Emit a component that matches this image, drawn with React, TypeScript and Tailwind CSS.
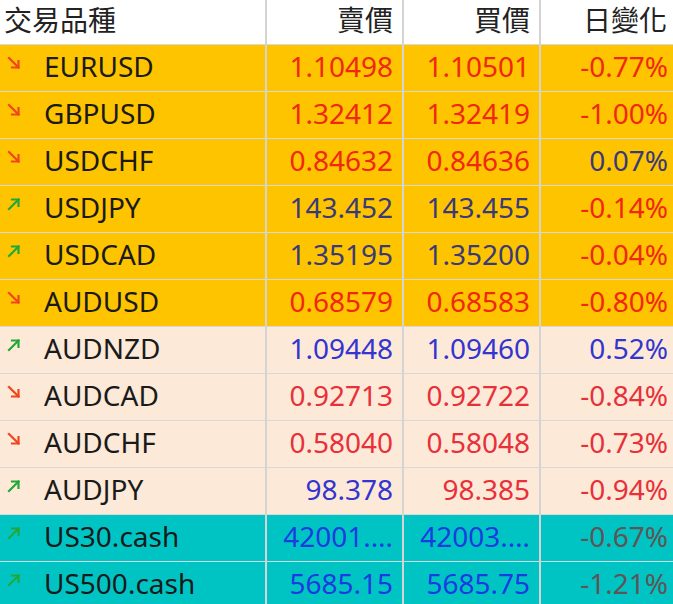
import type { ReactNode } from 'react';

type Tone = 'red' | 'navy' | 'blue' | 'gray';
type Band = 'gold' | 'peach' | 'teal';

type Quote = {
  symbol: string;
  up: boolean;
  bid: string;
  ask: string;
  change: string;
  tones: [Tone, Tone, Tone];
  band: Band;
};

const quotes: Quote[] = [
  { symbol: 'EURUSD', up: false, bid: '1.10498', ask: '1.10501', change: '-0.77%', tones: ['red', 'red', 'red'], band: 'gold' },
  { symbol: 'GBPUSD', up: false, bid: '1.32412', ask: '1.32419', change: '-1.00%', tones: ['red', 'red', 'red'], band: 'gold' },
  { symbol: 'USDCHF', up: false, bid: '0.84632', ask: '0.84636', change: '0.07%', tones: ['red', 'red', 'navy'], band: 'gold' },
  { symbol: 'USDJPY', up: true, bid: '143.452', ask: '143.455', change: '-0.14%', tones: ['navy', 'navy', 'red'], band: 'gold' },
  { symbol: 'USDCAD', up: true, bid: '1.35195', ask: '1.35200', change: '-0.04%', tones: ['navy', 'navy', 'red'], band: 'gold' },
  { symbol: 'AUDUSD', up: false, bid: '0.68579', ask: '0.68583', change: '-0.80%', tones: ['red', 'red', 'red'], band: 'gold' },
  { symbol: 'AUDNZD', up: true, bid: '1.09448', ask: '1.09460', change: '0.52%', tones: ['blue', 'blue', 'blue'], band: 'peach' },
  { symbol: 'AUDCAD', up: false, bid: '0.92713', ask: '0.92722', change: '-0.84%', tones: ['red', 'red', 'red'], band: 'peach' },
  { symbol: 'AUDCHF', up: false, bid: '0.58040', ask: '0.58048', change: '-0.73%', tones: ['red', 'red', 'red'], band: 'peach' },
  { symbol: 'AUDJPY', up: true, bid: '98.378', ask: '98.385', change: '-0.94%', tones: ['blue', 'red', 'red'], band: 'peach' },
  { symbol: 'US30.cash', up: true, bid: '42001.…', ask: '42003.…', change: '-0.67%', tones: ['blue', 'blue', 'gray'], band: 'teal' },
  { symbol: 'US500.cash', up: true, bid: '5685.15', ask: '5685.75', change: '-1.21%', tones: ['blue', 'blue', 'gray'], band: 'teal' },
];

const bandBg: Record<Band, string> = {
  gold: 'bg-[#ffc400]',
  peach: 'bg-[#fce9d7]',
  teal: 'bg-[#00c4c4]',
};

// the text colour depends on the band too, so pick per band
function toneClass(tone: Tone, band: Band) {
  if (tone === 'red') return band === 'gold' ? 'text-[#f02810]' : 'text-[#e8303a]';
  if (tone === 'navy') return 'text-[#3a3a78]';
  if (tone === 'gray') return 'text-[#5f5555]';
  return band === 'teal' ? 'text-[#1c3ce0]' : 'text-[#3434d0]';
}

function Arrow({ up }: { up: boolean }) {
  const color = up ? '#22a83a' : '#f0461e';
  return (
    <svg width="14" height="14" viewBox="0 0 14 14" fill="none" stroke={color} strokeWidth="2.2" strokeLinecap="square">
      {up ? (
        <>
          <path d="M2 12 L11.5 2.5" />
          <path d="M5 2.5 H11.5 V9" />
        </>
      ) : (
        <>
          <path d="M2 2 L11.5 11.5" />
          <path d="M11.5 5 V11.5 H5" />
        </>
      )}
    </svg>
  );
}

function Cell({ children, className = '' }: { children: ReactNode; className?: string }) {
  return (
    <td className={`h-[47px] pb-[4px] border-b border-[#d8d8d8] border-r-2 border-r-[#d4d4d4] last:border-r-0 whitespace-nowrap ${className}`}>
      {children}
    </td>
  );
}

export default function App() {
  return (
    <div className="w-[673px] h-[604px] overflow-hidden bg-white font-['Noto_Sans','Noto_Sans_CJK_TC',sans-serif] text-[28px] leading-none">
      <table className="border-collapse table-fixed w-[673px]">
        <colgroup>
          <col className="w-[266px]" />
          <col className="w-[137px]" />
          <col className="w-[137px]" />
          <col className="w-[133px]" />
        </colgroup>
        <thead>
          <tr className="text-[#222]">
            <th className="h-[44px] pb-[4px] font-normal text-left pl-[4px] border-b border-[#d8d8d8] border-r-2 border-r-[#d4d4d4]">交易品種</th>
            <th className="pb-[4px] font-normal text-right pr-[9px] border-b border-[#d8d8d8] border-r-2 border-r-[#d4d4d4]">賣價</th>
            <th className="pb-[4px] font-normal text-right pr-[9px] border-b border-[#d8d8d8] border-r-2 border-r-[#d4d4d4]">買價</th>
            <th className="pb-[4px] font-normal text-right pr-[6px] border-b border-[#d8d8d8]">日變化</th>
          </tr>
        </thead>
        <tbody>
          {quotes.map((q) => (
            <tr key={q.symbol} className={bandBg[q.band]}>
              <Cell className="text-[#1a1a1a]">
                <div className="flex items-center">
                  <span className="w-[44px] pl-[7px] pb-[5px] flex items-center">
                    <Arrow up={q.up} />
                  </span>
                  <span>{q.symbol}</span>
                </div>
              </Cell>
              <Cell className={`text-right pr-[9px] ${toneClass(q.tones[0], q.band)}`}>{q.bid}</Cell>
              <Cell className={`text-right pr-[9px] ${toneClass(q.tones[1], q.band)}`}>{q.ask}</Cell>
              <Cell className={`text-right pr-[5px] ${toneClass(q.tones[2], q.band)}`}>{q.change}</Cell>
            </tr>
          ))}
        </tbody>
      </table>
    </div>
  );
}
